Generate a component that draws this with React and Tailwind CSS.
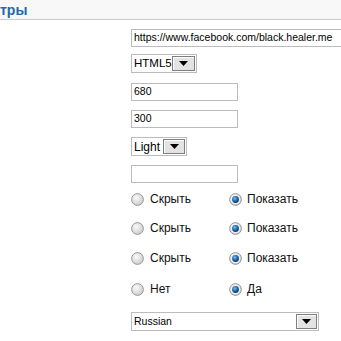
import React from 'react';

const Radio = ({ checked }) => (
  <svg width="13" height="13" viewBox="0 0 13 13" className="shrink-0">
    <defs>
      <radialGradient id="off" cx="40%" cy="35%" r="70%">
        <stop offset="0%" stopColor="#fbfbfb" />
        <stop offset="100%" stopColor="#c9c9c9" />
      </radialGradient>
      <radialGradient id="dot" cx="40%" cy="35%" r="65%">
        <stop offset="0%" stopColor="#7cc0f0" />
        <stop offset="55%" stopColor="#1c6fb8" />
        <stop offset="100%" stopColor="#0b2f63" />
      </radialGradient>
    </defs>
    <circle cx="6.5" cy="6.5" r="5.9" fill="url(#off)" stroke="#9a9a9a" strokeWidth="1" />
    {checked && (
      <>
        <circle cx="6.5" cy="6.5" r="4.6" fill="#f2f2f2" />
        <circle cx="6.5" cy="6.5" r="3.4" fill="url(#dot)" />
      </>
    )}
  </svg>
);

const DropButton = ({ w }) => (
  <div
    className={`${w} h-full flex items-center justify-center bg-[#e3e3e3] border border-[#7d7d7d] shadow-[inset_1px_1px_0_#fff]`}
  >
    <svg width="9" height="5" viewBox="0 0 9 5">
      <path d="M0 0 H9 L4.5 5 Z" fill="#000" />
    </svg>
  </div>
);

const Select = ({ value, width, btn, text = 'text-[12px]' }) => (
  <div className={`${width} h-[19px] flex items-stretch border border-[#bcbcbc] bg-white p-[1px]`}>
    <div className={`flex-1 flex items-center pl-[1px] ${text} text-black`}>{value}</div>
    <DropButton w={btn} />
  </div>
);

const Input = ({ value = '', width = 'w-[107px]' }) => (
  <div className={`${width} h-[18px] flex items-center border border-[#bcbcbc] bg-white pl-[2px] text-[10.5px] text-black whitespace-nowrap overflow-hidden`}>
    {value}
  </div>
);

const RadioRow = ({ left, right, className }) => (
  <div className={`flex items-center h-[16px] text-[12px] text-[#111] ${className}`}>
    <div className="w-[98px] flex items-center">
      <Radio />
      <span className="ml-[6px]">{left}</span>
    </div>
    <div className="flex items-center">
      <Radio checked />
      <span className="ml-[5px]">{right}</span>
    </div>
  </div>
);

export default function App() {
  return (
    <div
      className="w-[341px] h-[341px] overflow-hidden bg-white"
      style={{ fontFamily: '"Liberation Sans", Arial, sans-serif' }}
    >
      {/* Section header */}
      <div className="h-[20px] bg-[#f8f8f8] border-b border-[#cccccc] flex items-center">
        <span className="text-[14px] font-bold text-[#2468ad] leading-none">тры</span>
      </div>

      <div className="pl-[131px] flex flex-col">
        <div className="mt-[9px]">
          <Input value="https://www.facebook.com/black.healer.me" width="w-[215px]" />
        </div>
        <div className="mt-[7px]">
          <Select value="HTML5" width="w-[66px]" btn="w-[23px]" text="text-[11.5px]" />
        </div>
        <div className="mt-[10px]">
          <Input value="680" />
        </div>
        <div className="mt-[9px]">
          <Input value="300" />
        </div>
        <div className="mt-[9px]">
          <Select value="Light" width="w-[56px]" btn="w-[22px]" />
        </div>
        <div className="mt-[9px]">
          <Input />
        </div>

        <RadioRow left="Скрыть" right="Показать" className="mt-[8px]" />
        <RadioRow left="Скрыть" right="Показать" className="mt-[13px]" />
        <RadioRow left="Скрыть" right="Показать" className="mt-[14px]" />
        <RadioRow left="Нет" right="Да" className="mt-[15px]" />

        <div className="mt-[15px]">
          <Select value="Russian" width="w-[188px]" btn="w-[21px]" text="text-[10.5px]" />
        </div>
      </div>
    </div>
  );
}
